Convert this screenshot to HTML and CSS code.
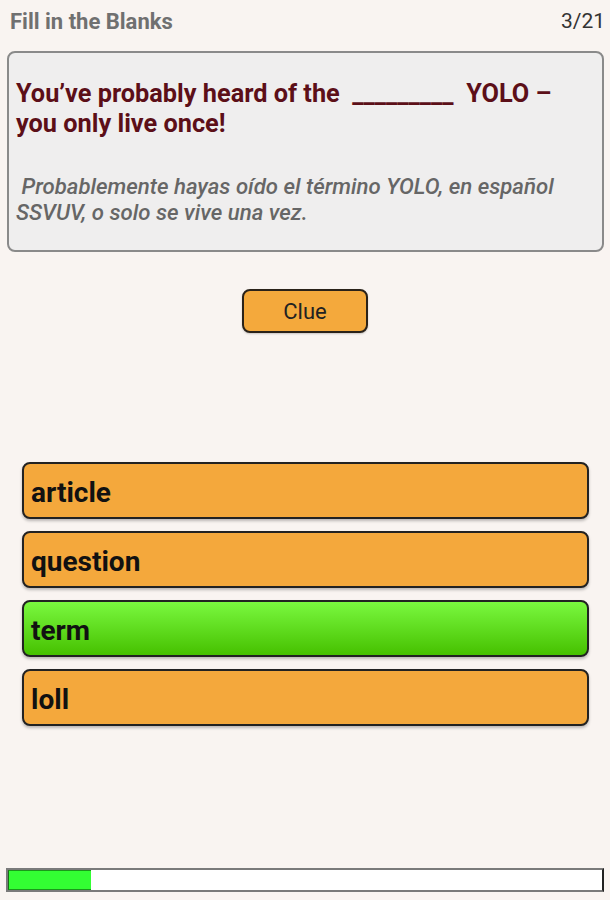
FILE: index.html
```html
<!DOCTYPE html>
<html lang="en">
<head>
<meta charset="utf-8">
<title>Fill in the Blanks</title>
<link rel="stylesheet" href="styles.css">
</head>
<body>
<div class="page">
  <header class="topbar">
    <span class="title">Fill in the Blanks</span>
    <span class="count">3/21</span>
  </header>
  <section class="card">
    <p class="question">You’ve probably heard of the&nbsp; _________&nbsp; YOLO – you only live once!</p>
    <p class="translation">&nbsp;Probablemente hayas oído el término YOLO, en español SSVUV, o solo se vive una vez.</p>
  </section>
  <div class="clue-row">
    <button class="clue">Clue</button>
  </div>
  <div class="options">
    <div class="option">article</div>
    <div class="option">question</div>
    <div class="option correct">term</div>
    <div class="option">loll</div>
  </div>
  <div class="progress"><div class="progress-fill" style="width: 14%"></div></div>
</div>
</body>
</html>
```
FILE: styles.css
```css
* { box-sizing: border-box; }
html, body { margin: 0; padding: 0; }
body {
  background: #f9f4f1;
  font-family: Roboto, "Liberation Sans", sans-serif;
}
.page {
  height: 900px;
  display: flex;
  flex-direction: column;
}
.topbar {
  display: flex;
  justify-content: space-between;
  align-items: center;
  height: 42px;
  padding: 0 5px 0 10px;
}
.title {
  font-size: 22px;
  font-weight: 700;
  color: #707070;
}
.count {
  font-size: 21px;
  color: #333;
}
.card {
  margin: 9px 6px 0 7px;
  height: 201px;
  background: #efeeee;
  border: 2px solid #8a8a8a;
  border-radius: 8px;
  padding: 26px 14px 0 7px;
}
.question {
  margin: 0;
  font-size: 25.3px;
  line-height: 30px;
  font-weight: 700;
  color: #5c0f18;
}
.translation {
  margin: 34px 0 0;
  font-size: 22.2px;
  line-height: 26px;
  font-style: italic;
  font-weight: 500;
  color: #666;
}
.clue-row {
  display: flex;
  justify-content: center;
  margin-top: 37px;
}
.clue {
  width: 126px;
  height: 44px;
  background: #f4a93c;
  border: 2px solid #2a2219;
  border-radius: 8px;
  font-family: Roboto, "Liberation Sans", sans-serif;
  font-size: 22px;
  color: #222;
  padding: 0;
  box-shadow: 0 1px 2px rgba(0,0,0,0.2);
}
.options {
  display: flex;
  flex-direction: column;
  gap: 12px;
  margin: 129px 21px 0 22px;
}
.option {
  height: 57px;
  background: #f4a83c;
  border: 2px solid #222;
  border-radius: 8px;
  padding: 3px 0 0 7px;
  display: flex;
  align-items: center;
  font-size: 28px;
  font-weight: 700;
  color: #111;
  box-shadow: 0 2px 3px rgba(0,0,0,0.25);
}
.option.correct {
  background: linear-gradient(to bottom, #7af83f, #46c100);
}
.progress {
  margin: auto 6px 8px 6px;
  height: 24px;
  background: #fff;
  border: 2px solid #7a7a7a;
  border-right-color: #222;
}
.progress-fill {
  height: 100%;
  background: #33ff33;
  border-left: 1px solid #1a6b1a;
  border-top: 1px solid #1a9a1a;
  border-bottom: 1px solid #1a9a1a;
}
```
